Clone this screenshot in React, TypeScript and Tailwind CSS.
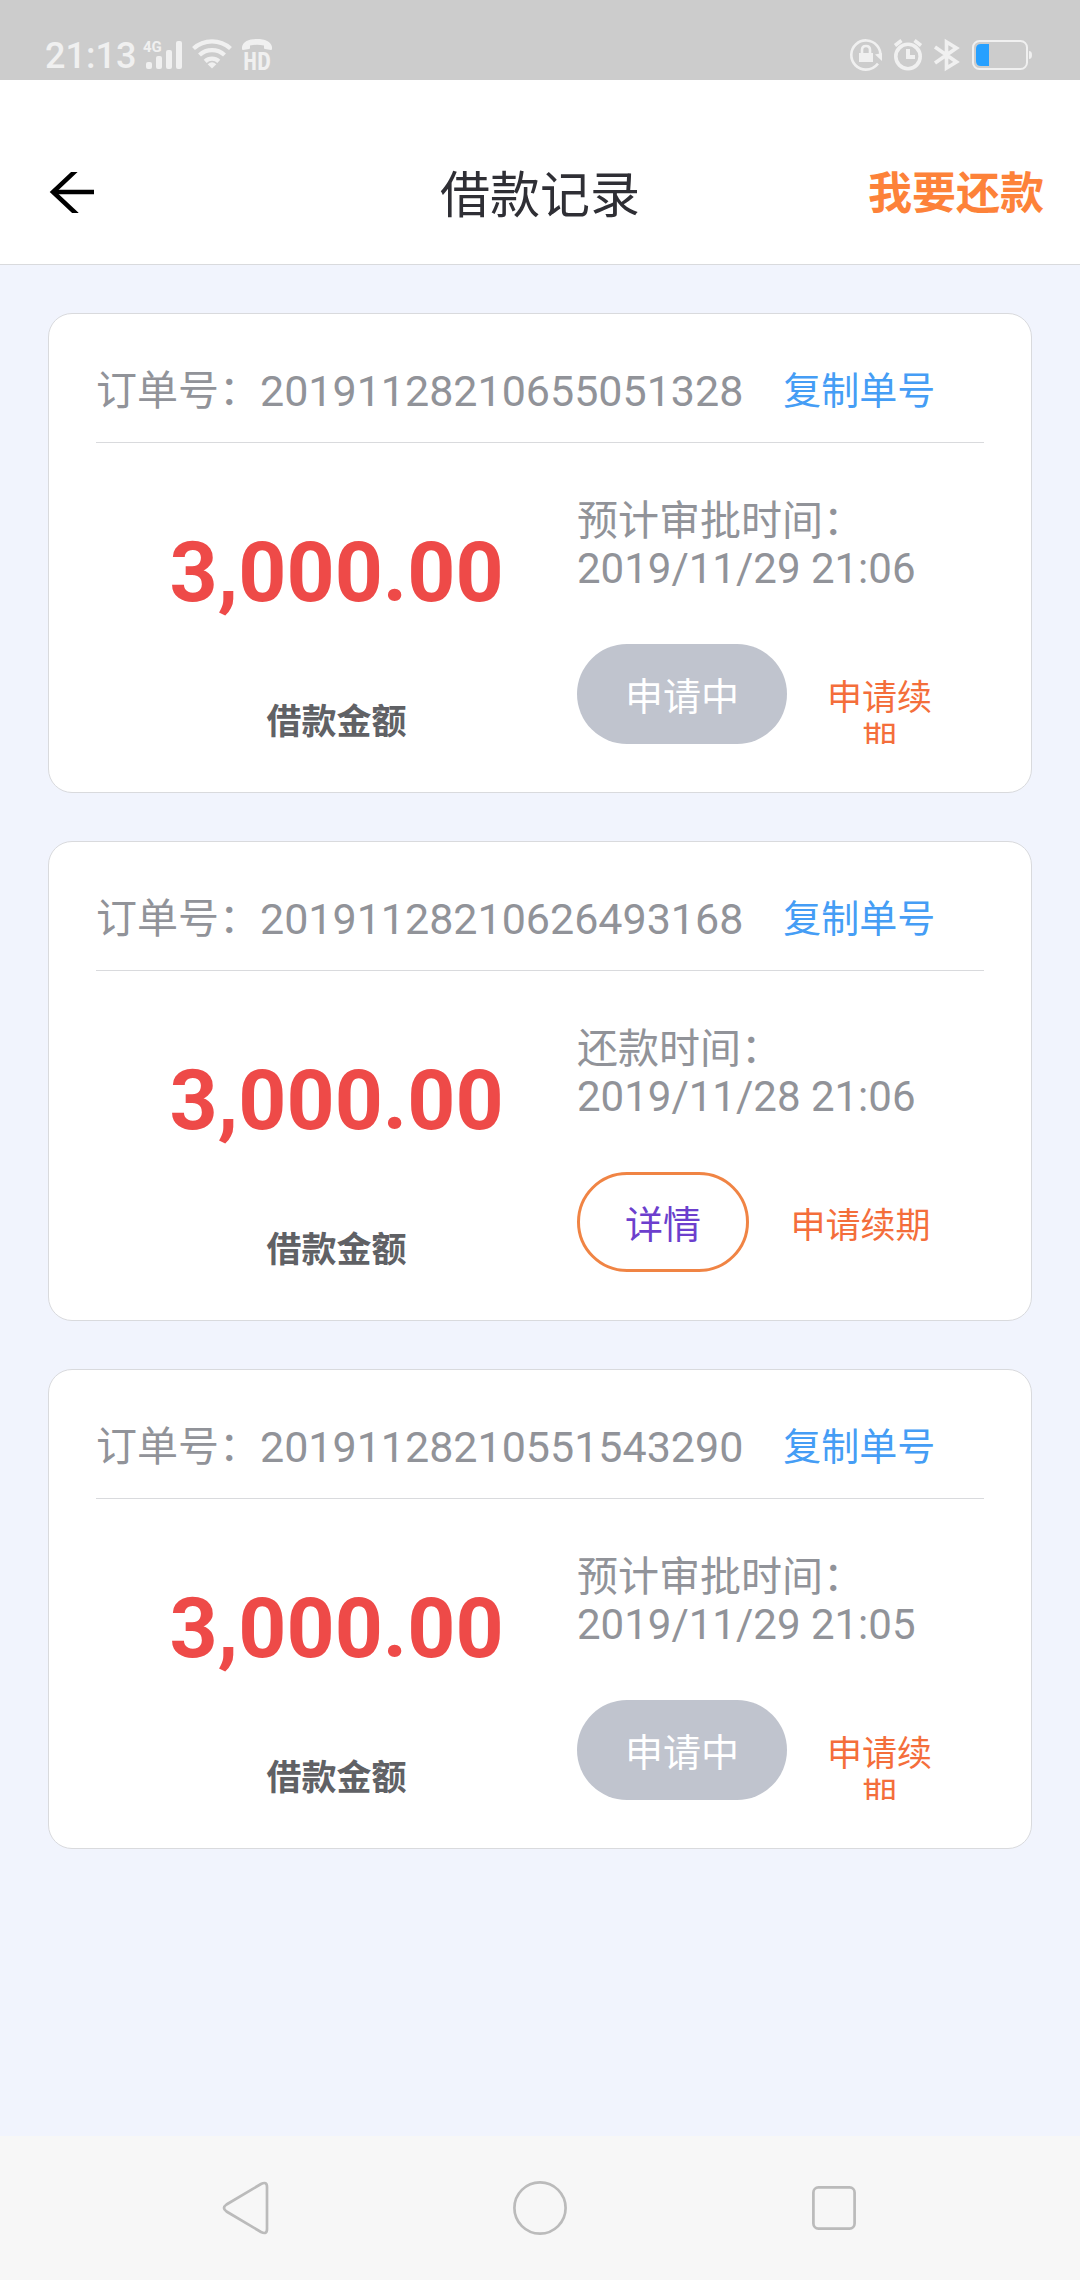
import { useState } from 'react';

type Order = {
  id: string;
  amount: string;
  timeLabel: string;
  time: string;
  pending: boolean;
};

const orders: Order[] = [
  { id: '20191128210655051328', amount: '3,000.00', timeLabel: '预计审批时间：', time: '2019/11/29 21:06', pending: true },
  { id: '20191128210626493168', amount: '3,000.00', timeLabel: '还款时间：', time: '2019/11/28 21:06', pending: false },
  { id: '20191128210551543290', amount: '3,000.00', timeLabel: '预计审批时间：', time: '2019/11/29 21:05', pending: true },
];

function StatusBar() {
  return (
    <div className="flex h-20 items-center justify-between bg-[#cccccc] pt-8 pr-12 pl-[45px] text-[#f0f0f0]">
      <div className="flex items-center">
        <span className="text-[36px] leading-[40px] font-medium">21:13</span>
        <svg className="ml-2 h-8 w-10 overflow-visible" viewBox="0 0 40 32" fill="currentColor">
          <text x="-1" y="12" fontSize="15" fontWeight="700">4G</text>
          <rect x="2" y="22" width="6" height="7" rx="2" />
          <rect x="12" y="16" width="6" height="13" rx="2" />
          <rect x="22" y="10" width="6" height="19" rx="2" />
          <rect x="32" y="1" width="6" height="28" rx="2" />
        </svg>
        <svg className="ml-2 h-8 w-10 overflow-visible" viewBox="0 0 40 32" fill="none" stroke="currentColor" strokeWidth="4.300">
          <path d="M1.500 8.500a27.500 27.500 0 0 1 37 0M7.500 15a18.500 18.500 0 0 1 25 0M13.200 21.300a10 10 0 0 1 13.600 0" />
          <path d="M20 28.500l-4.300-4.300q4.300-3.700 8.600 0z" fill="currentColor" stroke="none" />
        </svg>
        <svg className="ml-2.5 h-8 w-8 overflow-visible" viewBox="0 0 32 32" fill="currentColor">
          <path d="M0 7C1 1.500 7-1 15-1s14 2.500 15 8v2q0 1-1 1l-6-1q-1 0-1-1V5.500q-7-1.500-14 0V8q0 1-1 1l-6 1Q0 10 0 9z" />
          <text x="15" y="30" fontSize="25" fontWeight="700" textAnchor="middle" fontFamily="Open Sans Condensed, Roboto Condensed, Roboto">
            HD
          </text>
        </svg>
      </div>
      <div className="flex items-center">
        <svg className="h-8 w-8 overflow-visible" viewBox="0 2 32 32" fill="none" stroke="currentColor" strokeWidth="2.6">
          <path d="M30.400 18.500A14.600 14.600 0 1 0 16 31.600q7 0 12-6" />
          <path d="M25 16.500L32 15v8z" fill="currentColor" stroke="none" />
          <rect x="9" y="15" width="14" height="9" fill="currentColor" stroke="none" />
          <path d="M12 16v-4q0-4 4-4t4 4v4" />
        </svg>
        <svg className="ml-3 h-8 w-7 overflow-visible" viewBox="0 2 28 32" fill="none" stroke="currentColor" strokeWidth="3.600">
          <circle cx="14" cy="18.500" r="12.200" />
          <path d="M14 11v8h7" strokeWidth="4" />
          <path d="M1 7.500l6.500-5M20.500 2.500l6.500 5" />
        </svg>
        <svg className="ml-3 h-8 w-[26px] overflow-visible" viewBox="0 2 26 32" fill="none" stroke="currentColor" strokeWidth="3.600">
          <path d="M1 9L22.500 24l-10 6V4l10 6L1 25" />
        </svg>
        <svg className="ml-3 h-8 w-[60px] overflow-visible" viewBox="0 2 60 32" fill="none">
          <rect x="1" y="3" width="54" height="28" rx="6.500" stroke="currentColor" strokeWidth="2" />
          <path d="M17 6v22H9q-5 0-5-5V11q0-5 5-5z" fill="#26a0ff" />
          <path d="M57 13q3 0 3 4t-3 4z" fill="currentColor" />
        </svg>
      </div>
    </div>
  );
}

function Header() {
  return (
    <header className="grid grid-cols-[1fr_auto_1fr] items-center border-b border-[#d9dadd] bg-white px-9 pt-12">
      <button type="button" aria-label="返回" className="ml-3 justify-self-start">
        <svg className="h-12 w-12" viewBox="0 0 48 48" fill="none" stroke="#000" strokeWidth="4.500">
          <path d="M46 20H5" />
          <path d="M29-2.500L5 20l24 22.500" clipPath="url(#arrow-tips)" />
          <clipPath id="arrow-tips">
            <rect x="0" y="0" width="48" height="41" />
          </clipPath>
        </svg>
      </button>
      <h1 className="text-[50px] leading-[136px] text-[#2f2f35]">借款记录</h1>
      <a href="#repay" className="justify-self-end pb-1 text-[44px] leading-[60px] font-bold text-[#fd8239]">
        我要还款
      </a>
    </header>
  );
}

function OrderCard({ order }: { order: Order }) {
  const [copied, setCopied] = useState(false);

  const copyId = () => {
    navigator.clipboard?.writeText(order.id);
    setCopied(true);
  };

  return (
    <article className="rounded-3xl border border-[#d9dadd] bg-white px-[47px] pt-12">
      <div className="flex items-center border-b border-[#d9dadd] pb-[22px] leading-[58px] text-[#919399]">
        <span className="text-[41px]">订单号：</span>
        <span className="text-[43px]">{order.id}</span>
        <button type="button" onClick={copyId} aria-pressed={copied} className="ml-10 text-[38px] text-[#459df5]">
          复制单号
        </button>
      </div>
      <div className="grid grid-cols-[13fr_11fr] pb-12">
        <div className="pt-20 text-center">
          <p className="text-[84px] leading-[100px] font-bold text-[#ee4a48]">{order.amount}</p>
          <p className="mt-20 text-[35px] leading-[40px] font-bold text-[#606165]">借款金额</p>
        </div>
        <div className="pt-[54px] text-[#919399]">
          <p className="text-[41px] leading-[48px]">{order.timeLabel}</p>
          <p className="text-[42px] leading-[48px]">{order.time}</p>
          <div className="mt-[51px] mr-3 flex">
            {order.pending ? (
              <button type="button" disabled className="h-[100px] shrink-0 rounded-full bg-[#c0c4ce] px-12 pt-1.5 text-[38px] text-white">
                申请中
              </button>
            ) : (
              <button type="button" className="h-[100px] shrink-0 rounded-full border-3 border-[#f08444] px-[45px] pt-1.5 text-[38px] text-[#6c3fcd]">
                详情
              </button>
            )}
            <button type="button" className="flex h-[100px] flex-1 justify-center overflow-hidden px-[39px] pt-[34px] text-[35px] leading-[42px] text-[#f46e3b]">
              申请续期
            </button>
          </div>
        </div>
      </div>
    </article>
  );
}

function NavBar() {
  return (
    <nav className="mt-auto flex h-36 items-center justify-center gap-60 bg-[#f7f7f7] text-[#bbbbbb]">
      <button type="button" aria-label="返回">
        <svg className="h-[54px] w-[54px]" viewBox="0 0 54 54" fill="none" stroke="currentColor" strokeWidth="2.7">
          <path d="M7.500 23.500L42 3Q48 0 48 6v42q0 6-6 3L7.500 30.500q-5-3.500 0-7z" />
        </svg>
      </button>
      <button type="button" aria-label="主屏幕">
        <svg className="h-[54px] w-[54px]" viewBox="0 0 54 54" fill="none" stroke="currentColor" strokeWidth="2.7">
          <circle cx="27" cy="27" r="25.600" />
        </svg>
      </button>
      <button type="button" aria-label="最近任务">
        <svg className="h-[54px] w-[54px]" viewBox="0 0 54 54" fill="none" stroke="currentColor" strokeWidth="2.7">
          <rect x="6.400" y="6.400" width="41.200" height="41.200" rx="5" />
        </svg>
      </button>
    </nav>
  );
}

export default function App() {
  return (
    <div className="flex min-h-screen flex-col bg-[#f1f4fd] font-[Roboto,'Noto_Sans_CJK_SC',sans-serif]">
      <StatusBar />
      <Header />
      <main className="flex flex-col gap-12 p-12">
        {orders.map((order) => (
          <OrderCard key={order.id} order={order} />
        ))}
      </main>
      <NavBar />
    </div>
  );
}
